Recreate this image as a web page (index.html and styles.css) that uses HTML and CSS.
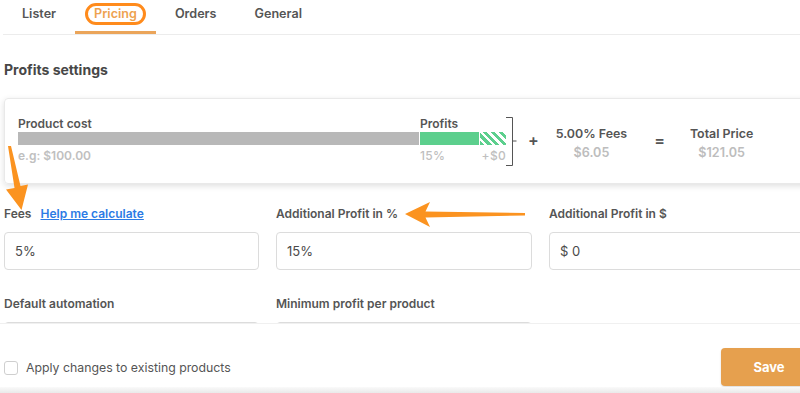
FILE: index.html
```html
<!DOCTYPE html>
<html>
<head>
<meta charset="utf-8">
<link rel="stylesheet" href="styles.css">
</head>
<body>
<div class="page">
  <div class="main">
    <nav class="tabs">
      <div class="tab">Lister</div>
      <div class="tab active"><span class="circled">Pricing</span></div>
      <div class="tab">Orders</div>
      <div class="tab">General</div>
    </nav>
    <h2 class="title">Profits settings</h2>
    <div class="card">
      <div class="cost">
        <div class="lbl">Product cost</div>
        <div class="bar gray"></div>
        <div class="hint">e.g: $100.00</div>
      </div>
      <div class="profits">
        <div class="lbl">Profits</div>
        <div class="pbar"><div class="green"></div><div class="striped"></div></div>
        <div class="hint split"><span>15%</span><span>+$0</span></div>
      </div>
      <svg class="bracket" width="11" height="49" viewBox="0 0 11 49">
        <path d="M0 0.5 H6.5 V48.5 H0 M6.5 24 H10.5" fill="none" stroke="#555" stroke-width="1"/>
      </svg>
      <div class="op plus">+</div>
      <div class="sum fees">
        <div class="lbl2">5.00% Fees</div>
        <div class="val">$6.05</div>
      </div>
      <div class="op eq">=</div>
      <div class="sum total">
        <div class="lbl2">Total Price</div>
        <div class="val">$121.05</div>
      </div>
    </div>
    <div class="fields">
      <div class="field">
        <div class="flabel">Fees <a class="link" href="#">Help me calculate</a></div>
        <div class="input">5%</div>
      </div>
      <div class="field">
        <div class="flabel">Additional Profit in %</div>
        <div class="input">15%</div>
      </div>
      <div class="field">
        <div class="flabel">Additional Profit in $</div>
        <div class="input">$ 0</div>
      </div>
      <div class="field">
        <div class="flabel">Default automation</div>
        <div class="input"></div>
      </div>
      <div class="field">
        <div class="flabel">Minimum profit per product</div>
        <div class="input"></div>
      </div>
    </div>
  </div>
  <footer class="footer">
    <label class="check"><span class="box"></span><span>Apply changes to existing products</span></label>
    <button class="save">Save</button>
  </footer>
  <div class="shade"></div>
  <svg class="arrows" width="800" height="393" viewBox="0 0 800 393">
    <polygon points="8,146 11,146 20.5,186 28,184.5 21.5,210 6,189.5 14.5,188" fill="#fb9320"/>
    <polygon points="405,214 430,202 425.5,211.5 525,213 525,215.5 425.5,217.5 430,227" fill="#fb9320"/>
  </svg>
</div>
</body>
</html>
```

FILE: styles.css
```css
* { box-sizing: border-box; }
body {
  margin: 0;
  font-family: Inter, "Noto Sans", sans-serif;
  color: #555;
  background: #fff;
}
.page {
  position: relative;
  width: 800px;
  height: 393px;
  overflow: hidden;
  display: flex;
  flex-direction: column;
}
.main {
  height: 323px;
  flex: none;
  overflow: hidden;
}
.tabs {
  display: flex;
  height: 35px;
  margin-left: 3px;
  border-bottom: 1px solid #ececec;
}
.tab {
  height: 34px;
  padding: 6px 19px 0;
  font-size: 12.6px;
  line-height: 16px;
  font-weight: 600;
  color: #555;
  border-bottom: 3px solid transparent;
}
.tab.active {
  color: #eea24f;
  border-bottom-color: #eba55a;
}
.circled {
  display: inline-block;
  padding: 0 6px;
  margin: 0 -6px;
  border-radius: 11px;
  outline: 3px solid #ff8b1c;
  outline-offset: 0;
}
.title {
  margin: 26px 0 0 4px;
  font-size: 14px;
  line-height: 17px;
  font-weight: 700;
  color: #474747;
}
.card {
  margin: 20px 0 0 4px;
  width: 830px;
  height: 86px;
  border: 1px solid #e9e9e9;
  border-radius: 4px;
  box-shadow: 0 2px 6px rgba(0, 0, 0, 0.13);
  display: flex;
  align-items: flex-start;
  padding: 17px 0 0 13px;
}
.lbl {
  font-size: 12px;
  line-height: 15px;
  font-weight: 600;
  color: #555;
  margin-bottom: 1px;
}
.cost { width: 401px; }
.bar { height: 13px; }
.gray { background: #b8b8b8; }
.hint {
  margin-top: 3px;
  font-size: 12px;
  line-height: 15px;
  font-weight: 600;
  color: #c0c0c0;
}
.profits { width: 86px; margin-left: 1px; }
.pbar { display: flex; height: 13px; gap: 1px; }
.green { width: 59px; background: #5ccf8d; }
.striped {
  flex: 1;
  background: repeating-linear-gradient(45deg, #5ccf8d 0 3px, #fff 3px 5.5px);
}
.split { display: flex; justify-content: space-between; font-weight: 500; letter-spacing: 0.3px; }
.bracket { margin-top: 1px; flex: none; }
.op {
  font-size: 16px;
  line-height: 20px;
  font-weight: 600;
  color: #555;
  margin-top: 14px;
}
.plus { margin-left: 11px; }
.eq { margin-left: 27px; }
.sum { margin-top: 10px; text-align: center; }
.fees { margin-left: 17px; }
.total { margin-left: 25px; }
.lbl2 {
  font-size: 12.4px;
  line-height: 15px;
  font-weight: 600;
  color: #555;
}
.val {
  margin-top: 4px;
  font-size: 12.6px;
  line-height: 15px;
  font-weight: 600;
  color: #bdbdbd;
}
.fields {
  margin: 22px 0 0 4px;
  display: grid;
  grid-template-columns: 255px 256px 256px;
  column-gap: 17px;
  row-gap: 26px;
}
.flabel {
  font-size: 12px;
  line-height: 15px;
  font-weight: 600;
  color: #555;
}
.link {
  margin-left: 6px;
  color: #2c7be5;
  text-decoration: underline;
}
.input {
  margin-top: 11px;
  height: 38px;
  border: 1px solid #dcdcdc;
  border-radius: 4px;
  padding-left: 10px;
  font-size: 13px;
  line-height: 36px;
  color: #4a4a4a;
}
.footer {
  flex: none;
  height: 64px;
  border-top: 1px solid #f0f0f0;
  display: flex;
  justify-content: space-between;
  align-items: flex-start;
  padding: 24px 0 0 4px;
}
.check {
  display: flex;
  align-items: center;
  gap: 8px;
  margin-top: 12px;
  font-size: 12.3px;
  line-height: 16px;
  color: #555;
}
.box {
  width: 14px;
  height: 14px;
  border: 1px solid #cfcfcf;
  border-radius: 3px;
  background: #fff;
}
.save {
  width: 96px;
  height: 38px;
  margin-right: -17px;
  border: none;
  border-radius: 4px;
  background: #e6a04e;
  color: #fff;
  font-family: Inter, "Noto Sans", sans-serif;
  font-size: 13px;
  font-weight: 700;
  box-shadow: 0 1px 2px rgba(0, 0, 0, 0.15);
}
.shade {
  flex: none;
  height: 6px;
  background: linear-gradient(#fafafa, #e9e9e9);
}
.arrows {
  position: absolute;
  left: 0;
  top: 0;
  pointer-events: none;
}
```
